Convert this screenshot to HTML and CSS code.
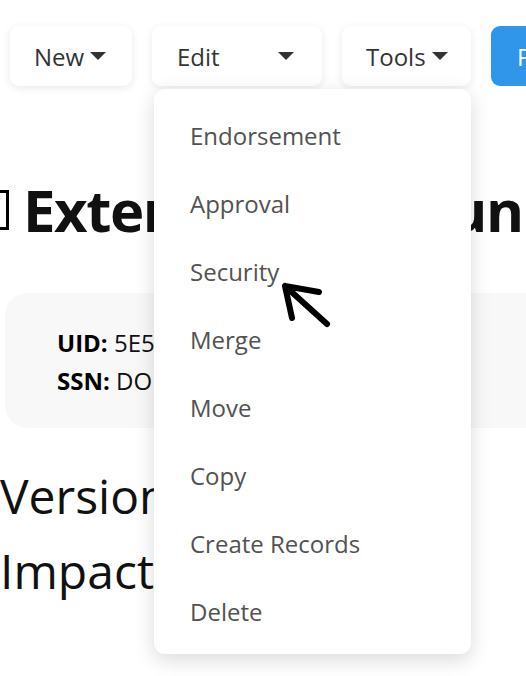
FILE: index.html
```html
<!DOCTYPE html>
<html lang="en">
<head>
<meta charset="utf-8">
<title>External Communications</title>
<link rel="stylesheet" href="styles.css">
</head>
<body>
<div class="page">
  <div class="toolbar">
    <button class="btn btn-new">New <span class="caret"></span></button>
    <button class="btn btn-edit">Edit <span class="caret"></span></button>
    <button class="btn btn-tools">Tools <span class="caret"></span></button>
    <button class="btn btn-primary">Publish</button>
  </div>

  <h1 class="title"><span class="title-icon"></span>External Communications</h1>

  <div class="card">
    <div class="row"><b>UID:</b> 5E5A9F21-07C3-44D8-CEB74A</div>
    <div class="row"><b>SSN:</b> DO NOT DISCLOSE</div>
  </div>

  <div class="section">Version history</div>
  <div class="section">Impact analysis</div>

  <ul class="menu">
    <li>Endorsement</li>
    <li>Approval</li>
    <li>Security</li>
    <li>Merge</li>
    <li>Move</li>
    <li>Copy</li>
    <li>Create Records</li>
    <li>Delete</li>
  </ul>

  <svg class="cursor" width="52" height="50" viewBox="0 0 52 50">
    <path d="M4 4 L46 42 M4 4 L38 10 M4 4 L11 36" fill="none" stroke="#000" stroke-width="6" stroke-linecap="round" stroke-linejoin="round"/>
  </svg>
</div>
</body>
</html>
```

FILE: styles.css
```css
html, body {
  margin: 0;
  padding: 0;
  background: #fff;
  overflow: hidden;
}
body {
  font-family: "Open Sans", "Noto Sans", sans-serif;
  color: #111;
  width: 526px;
  height: 676px;
}
.page {
  position: relative;
  width: 526px;
  height: 676px;
  overflow: hidden;
}
.toolbar {
  display: flex;
  gap: 20px;
  padding: 26px 0 0 10px;
  white-space: nowrap;
}
.btn {
  flex: none;
  height: 60px;
  border: none;
  border-radius: 9px;
  background: #fff;
  box-shadow: 0 2px 8px rgba(0, 0, 0, 0.09);
  font-family: inherit;
  font-size: 24px;
  color: #333;
  display: flex;
  align-items: center;
  padding: 0 24px;
  gap: 6px;
}
.btn-new { width: 122px; }
.btn-edit { width: 170px; justify-content: space-between; padding: 0 28px 0 25px; }
.btn-tools { width: 129px; }
.btn-primary {
  background: #2f96ea;
  color: #fff;
  padding: 0 26px;
  box-shadow: none;
}
.caret {
  width: 0;
  height: 0;
  border-left: 8px solid transparent;
  border-right: 8px solid transparent;
  border-top: 8px solid #333;
}
.title {
  margin: 84px 0 0 -19px;
  font-size: 58px;
  font-weight: 700;
  line-height: 80px;
  display: flex;
  align-items: center;
  white-space: nowrap;
  letter-spacing: -1.4px;
}
.title-icon {
  flex: none;
  width: 22px;
  height: 34px;
  border: 3.5px solid #000;
  margin-right: 14px;
}
.card {
  margin: 43px 0 0 5px;
  width: 560px;
  box-sizing: border-box;
  height: 135px;
  background: #f8f8f8;
  border-radius: 22px;
  padding: 31px 52px;
  font-size: 24px;
  line-height: 38px;
  white-space: nowrap;
  color: #111;
}
.row b { font-weight: 700; color: #000; }
.section {
  font-size: 48px;
  line-height: 75px;
  white-space: nowrap;
  color: #111;
}
.card + .section { margin-top: 30px; }
.menu {
  position: absolute;
  left: 154px;
  top: 89px;
  width: 317px;
  height: 565px;
  box-sizing: border-box;
  margin: 0;
  padding: 12px 0 9px;
  list-style: none;
  background: #fff;
  border-radius: 11px;
  box-shadow: 0 6px 20px rgba(0, 0, 0, 0.15);
}
.menu li {
  height: 68px;
  display: flex;
  align-items: center;
  padding-left: 36px;
  font-size: 24px;
  color: #525252;
}
.cursor {
  position: absolute;
  left: 281px;
  top: 282px;
}
```
